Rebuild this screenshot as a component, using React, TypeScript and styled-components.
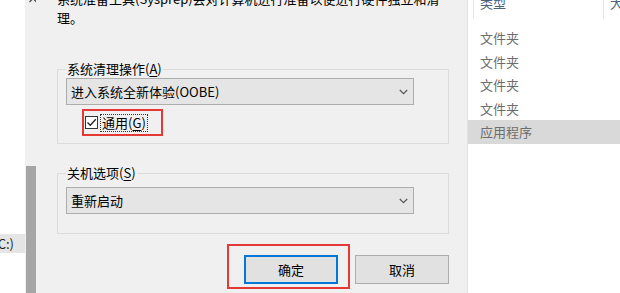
import React from "react";
import styled, { createGlobalStyle } from "styled-components";

const Global = createGlobalStyle`
  html, body { margin: 0; padding: 0; background: #fff; }
  body { font-family: "Noto Sans CJK SC", "Noto Sans", sans-serif; font-size: 13px; color: #000; }
  * { box-sizing: border-box; }
`;

const Screen = styled.div`
  width: 620px;
  height: 293px;
  display: flex;
  overflow: hidden;
  background: #fff;
`;

const TreePane = styled.div`
  width: 25px;
  flex: none;
  display: flex;
  flex-direction: column;
  padding-top: 234px;
  overflow: hidden;
`;

const TreeRow = styled.div`
  height: 19px;
  background: #e5e5e5;
  display: flex;
  align-items: center;
  justify-content: flex-end;
  padding-right: 11px;
  white-space: nowrap;
  overflow: hidden;
  color: #222;
  line-height: 19px;
`;

const ScrollBar = styled.div`
  width: 11px;
  flex: none;
  background: #f0f0f0;
  display: flex;
  flex-direction: column;
  align-items: center;
`;

const ScrollArrow = styled.svg`
  margin-top: -4px;
  margin-left: 4px;
  flex: none;
`;

const ScrollThumb = styled.div`
  margin-top: 162px;
  flex: 1;
  width: 10px;
  margin-left: 1px;
  background: #a6a6a6;
`;

const Dialog = styled.div`
  width: 432px;
  flex: none;
  background: #f0f0f0;
  border-right: 1px solid #e2e2e2;
  padding-left: 21px;
  display: flex;
  flex-direction: column;
`;

const Intro = styled.div`
  margin-top: -11px;
  width: 400px;
  display: flex;
  flex-direction: column;
`;

const IntroLine = styled.div`
  height: 19px;
  line-height: 19px;
  white-space: nowrap;
`;

const Group = styled.fieldset<{ $top: number; $padTop: number; $padBottom: number }>`
  margin: ${(p) => p.$top}px 0 0 0;
  width: 392px;
  border: 1px solid #dcdcdc;
  padding: ${(p) => p.$padTop}px 8px ${(p) => p.$padBottom}px 8px;
  min-width: 0;
`;

const Legend = styled.legend`
  padding: 0 1px;
  margin-left: 0;
  line-height: 18px;
  height: 18px;
  font-size: 13px;
`;

const Key = styled.span`
  text-decoration: underline;
  text-underline-offset: 2px;
`;

const Combo = styled.div`
  width: 348px;
  height: 27px;
  background: #e5e5e5;
  border: 1px solid #adadad;
  display: flex;
  align-items: center;
  justify-content: space-between;
  padding: 0 5px 0 4px;
  line-height: 25px;
`;

const ComboText = styled.span`
  white-space: nowrap;
`;

const CheckRow = styled.div`
  margin: 4px 0 0 16px;
  width: 81px;
  height: 27px;
  border: 2px solid #e53935;
  display: flex;
  align-items: center;
  padding-left: 1px;
`;

const CheckBox = styled.span`
  width: 13px;
  height: 13px;
  border: 1px solid #333;
  background: #fff;
  display: flex;
  align-items: center;
  justify-content: center;
  flex: none;
`;

const CheckLabel = styled.span`
  margin-left: 2px;
  border: 1px dotted #333;
  padding: 0 1px;
  line-height: 16px;
  white-space: nowrap;
`;

const ButtonRow = styled.div`
  margin-top: 10px;
  width: 392px;
  display: flex;
  justify-content: flex-end;
  align-items: flex-start;
  gap: 5px;
`;

const Highlight = styled.div`
  border: 2px solid #e53935;
  padding: 9px 10px 3px 15px;
`;

const Button = styled.div<{ $primary?: boolean }>`
  width: 94px;
  height: 29px;
  margin-top: ${(p) => (p.$primary ? 0 : 11)}px;
  background: #e1e1e1;
  border: ${(p) => (p.$primary ? "2px solid #0078d7" : "1px solid #adadad")};
  display: flex;
  align-items: center;
  justify-content: center;
  font-size: 13px;
`;

const ListPane = styled.div`
  flex: 1;
  min-width: 0;
  overflow: hidden;
  background: #fff;
  display: flex;
  flex-direction: column;
`;

const Header = styled.div`
  margin-top: -7px;
  height: 26px;
  display: flex;
  padding-left: 5px;
`;

const HeaderCell = styled.div<{ $w: number }>`
  width: ${(p) => p.$w}px;
  flex: none;
  border-left: 1px solid #e5e5e5;
  padding-left: 6px;
  color: #4c607a;
  line-height: 20px;
  white-space: nowrap;
  overflow: hidden;
`;

const Rows = styled.div`
  margin-top: 7px;
  display: flex;
  flex-direction: column;
`;

const Row = styled.div<{ $selected?: boolean }>`
  height: 23.5px;
  line-height: 23.5px;
  padding-left: 12px;
  color: #6d6d6d;
  background: ${(p) => (p.$selected ? "#d9d9d9" : "transparent")};
`;

const Chevron = () => (
  <svg width="9" height="6" viewBox="0 0 9 6">
    <path d="M0.8 1 L4.5 4.6 L8.2 1" fill="none" stroke="#555" strokeWidth="1.2" />
  </svg>
);

export default function App() {
  const rows = ["文件夹", "文件夹", "文件夹", "文件夹"];
  return (
    <>
      <Global />
      <Screen>
        <TreePane>
          <TreeRow>本地磁盘 (C:)</TreeRow>
        </TreePane>
        <ScrollBar>
          <ScrollArrow width="8" height="8" viewBox="0 0 8 8">
            <path d="M0.5 6 L4 2.5 L7.5 6" fill="none" stroke="#444" strokeWidth="1.2" />
          </ScrollArrow>
          <ScrollThumb />
        </ScrollBar>
        <Dialog>
          <Intro>
            <IntroLine>系统准备工具(Sysprep)会对计算机进行准备以便进行硬件独立和清</IntroLine>
            <IntroLine>理。</IntroLine>
          </Intro>
          <Group $top={33} $padTop={0} $padBottom={7}>
            <Legend>
              系统清理操作(<Key>A</Key>)
            </Legend>
            <Combo>
              <ComboText>进入系统全新体验(OOBE)</ComboText>
              <Chevron />
            </Combo>
            <CheckRow>
              <CheckBox>
                <svg width="11" height="11" viewBox="0 0 11 11">
                  <path d="M1.5 5.5 L4.3 8.3 L9.8 2.3" fill="none" stroke="#222" strokeWidth="1.3" />
                </svg>
              </CheckBox>
              <CheckLabel>
                通用(<Key>G</Key>)
              </CheckLabel>
            </CheckRow>
          </Group>
          <Group $top={20} $padTop={5} $padBottom={19}>
            <Legend>
              关机选项(<Key>S</Key>)
            </Legend>
            <Combo>
              <ComboText>重新启动</ComboText>
              <Chevron />
            </Combo>
          </Group>
          <ButtonRow>
            <Highlight>
              <Button $primary>确定</Button>
            </Highlight>
            <Button>取消</Button>
          </ButtonRow>
        </Dialog>
        <ListPane>
          <Header>
            <HeaderCell $w={130}>类型</HeaderCell>
            <HeaderCell $w={30}>大小</HeaderCell>
          </Header>
          <Rows>
            {rows.map((r, i) => (
              <Row key={i}>{r}</Row>
            ))}
            <Row $selected>应用程序</Row>
          </Rows>
        </ListPane>
      </Screen>
    </>
  );
}
